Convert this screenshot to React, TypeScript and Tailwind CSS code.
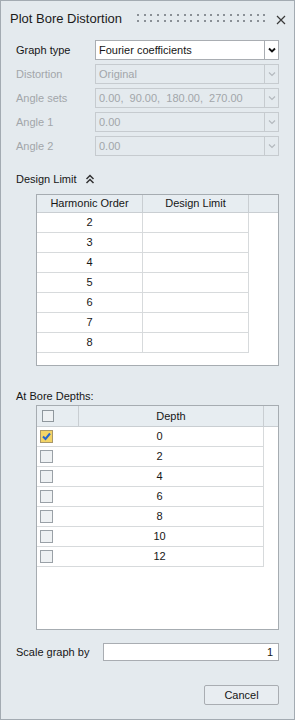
import React from "react";

function Chevron({ disabled }: { disabled?: boolean }) {
  return (
    <svg width="8" height="6" viewBox="0 0 8 6">
      <path
        d="M1 1.5 L4 4.5 L7 1.5"
        fill="none"
        stroke={disabled ? "#b4b9be" : "#111111"}
        strokeWidth={disabled ? 1.2 : 1.9}
      />
    </svg>
  );
}

function Select({ value, disabled }: { value: string; disabled?: boolean }) {
  return (
    <div className="flex h-[20px] w-[184px]">
      <div
        className={
          disabled
            ? "flex-1 flex items-center pl-[3px] whitespace-pre border border-[#c6cbcf] bg-[#e4eaee] text-[#a2a6aa]"
            : "flex-1 flex items-center pl-[3px] whitespace-pre border border-[#a9adb2] bg-white text-[#161616]"
        }
      >
        {value}
      </div>
      <div
        className={
          disabled
            ? "w-[14px] flex items-center justify-center border border-l-0 border-[#c6cbcf] bg-[#e4eaee]"
            : "w-[14px] flex items-center justify-center border border-l-0 border-[#a9adb2] bg-white"
        }
      >
        <Chevron disabled={disabled} />
      </div>
    </div>
  );
}

function Row({ label, value, disabled }: { label: string; value: string; disabled?: boolean }) {
  return (
    <div className="flex items-center h-[20px]">
      <div className={disabled ? "w-[79px] text-[#a2a6aa]" : "w-[79px] text-[#161616]"}>{label}</div>
      <Select value={value} disabled={disabled} />
    </div>
  );
}

function CheckBox({ checked }: { checked?: boolean }) {
  if (checked) {
    return (
      <div className="w-[13px] h-[13px] border border-[#a8976a] bg-[#f3d466] flex items-center justify-center">
        <svg width="11" height="11" viewBox="0 0 11 11">
          <path d="M2 5.5 L4.5 8 L9 2.5" fill="none" stroke="#2566cf" strokeWidth="2" />
        </svg>
      </div>
    );
  }
  return <div className="w-[13px] h-[13px] border border-[#9aa1a7] bg-[#eef1f3]" />;
}

export default function App() {
  const harmonic = ["2", "3", "4", "5", "6", "7", "8"];
  const depths = ["0", "2", "4", "6", "8", "10", "12"];
  const dots = Array.from({ length: 20 }, (_, i) => i);
  return (
    <div className="w-[295px] h-[720px] bg-[#e4eaee] border border-[#a3abb2] flex flex-col font-['Liberation_Sans',Arial,sans-serif] text-[11px] text-[#161616] overflow-hidden">
      {/* Title bar */}
      <div className="flex items-center h-[24px] mt-[6px] pl-[9px]">
        <div className="text-[13px] text-[#1b1b1b] w-[126px]">Plot Bore Distortion</div>
        <svg width="130" height="10" viewBox="0 0 130 10" className="ml-[1px]">
          {dots.map((i) => (
            <g key={i}>
              <rect x={Math.round(i * 6.65)} y={0} width="2" height="2" fill="#8a9096" />
              <rect x={Math.round(i * 6.65)} y={6} width="2" height="2" fill="#8a9096" />
            </g>
          ))}
        </svg>
        <svg width="10" height="10" viewBox="0 0 10 10" className="ml-[9px] mt-[1px]">
          <path d="M1 1 L9 9 M9 1 L1 9" stroke="#3a3a3a" strokeWidth="1.2" />
        </svg>
      </div>

      <div className="flex flex-col pl-[15px]">
        {/* Form rows */}
        <div className="flex flex-col gap-[4px] mt-[9px]">
          <Row label="Graph type" value="Fourier coefficients" />
          <Row label="Distortion" value="Original" disabled />
          <Row label="Angle sets" value="0.00,  90.00,  180.00,  270.00" disabled />
          <Row label="Angle 1" value="0.00" disabled />
          <Row label="Angle 2" value="0.00" disabled />
        </div>

        {/* Design Limit */}
        <div className="flex items-center h-[16px] mt-[15px]">
          <span>Design Limit</span>
          <svg width="10" height="10" viewBox="0 0 10 10" className="ml-[8px]">
            <path d="M1.5 5 L5 1.5 L8.5 5 M1.5 9 L5 5.5 L8.5 9" fill="none" stroke="#333" strokeWidth="1.5" />
          </svg>
        </div>

        <div className="ml-[20px] mt-[7px] w-[243px] h-[172px] border border-[#a6acb1] bg-white flex flex-col">
          <div className="flex h-[18px] bg-[#e7edf1] border-b border-[#c9ced2]">
            <div className="w-[106px] border-r border-[#c9ced2] flex items-center justify-center">Harmonic Order</div>
            <div className="w-[106px] border-r border-[#c9ced2] flex items-center justify-center">Design Limit</div>
            <div className="flex-1" />
          </div>
          {harmonic.map((h) => (
            <div key={h} className="flex h-[20px] w-[212px] border-b border-[#d7dadc]">
              <div className="w-[106px] border-r border-[#d7dadc] flex items-center justify-center">{h}</div>
              <div className="w-[106px] border-r border-[#d7dadc]" />
            </div>
          ))}
        </div>

        {/* At Bore Depths */}
        <div className="flex items-center h-[16px] mt-[22px]">At Bore Depths:</div>

        <div className="ml-[20px] mt-[1px] w-[243px] h-[225px] border border-[#a6acb1] bg-white flex flex-col">
          <div className="flex h-[21px] bg-[#e7edf1] border-b border-[#c9ced2]">
            <div className="w-[42px] border-r border-[#c9ced2] flex items-center pl-[5px]">
              <div className="w-[12px] h-[12px] border border-[#8f979d] bg-[#eef1f3]" />
            </div>
            <div className="w-[185px] border-r border-[#c9ced2] flex items-center justify-center">Depth</div>
            <div className="flex-1" />
          </div>
          {depths.map((d, i) => (
            <div key={d} className="flex h-[20px] w-[227px] border-b border-r border-[#d7dadc]">
              <div className="w-[19px] flex items-center pl-[3px]">
                <CheckBox checked={i === 0} />
              </div>
              <div className="flex-1 flex items-center justify-center">{d}</div>
            </div>
          ))}
        </div>

        {/* Scale graph by */}
        <div className="flex items-center mt-[13px] h-[18px]">
          <div className="w-[87px]">Scale graph by</div>
          <div className="w-[176px] h-[18px] border border-[#a9adb2] bg-white flex items-center justify-end pr-[5px]">1</div>
        </div>

        {/* Cancel */}
        <div className="flex justify-end mt-[24px] w-[263px]">
          <div className="w-[75px] h-[20px] border border-[#a9adb2] rounded-[2px] bg-[#e8edf1] flex items-center justify-center">
            Cancel
          </div>
        </div>
      </div>
    </div>
  );
}
